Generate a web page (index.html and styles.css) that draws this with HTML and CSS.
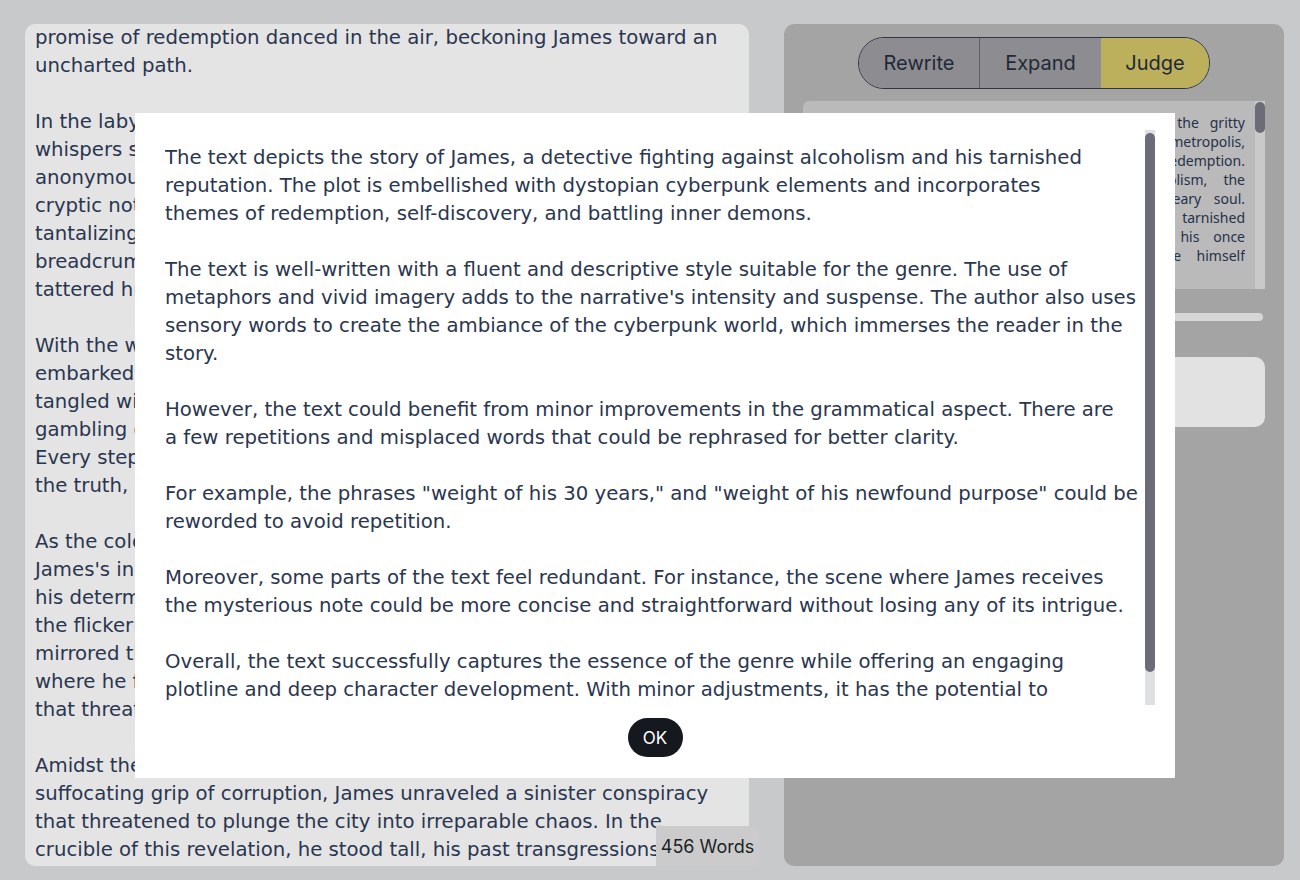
FILE: index.html
```html
<!DOCTYPE html>
<html lang="en">
<head>
<meta charset="utf-8">
<title>Story Editor</title>
<link rel="stylesheet" href="styles.css">
</head>
<body>
<div class="app">
  <div class="editor-col">
    <div class="editor">
      <p>promise of redemption danced in the air, beckoning James toward an<br>uncharted path.</p>
      <p>In the labyrinthine alleys of the neon-drenched city, hushed<br>whispers spoke of a hidden truth, carried by an elusive informant. An<br>anonymous message flickered across his battered terminal, a<br>cryptic note promising answers to questions he had long buried. The<br>tantalizing clues led him deeper into the underbelly, a trail of<br>breadcrumbs scattered across rain-slicked streets and the<br>tattered hideouts of those the city had forgotten.</p>
      <p>With the weight of his newfound purpose on his shoulders, James<br>embarked on a perilous journey through a web of deceit, one<br>tangled with corrupt officials, ruthless syndicates, and illicit<br>gambling dens that thrived beneath the glow of holographic signs.<br>Every step brought him closer to the heart of the darkness and to<br>the truth, yet each revelation tested the fragile resolve he clung to.</p>
      <p>As the colossal towers loomed above, casting long shadows over<br>James's inner turmoil, he fought against the pull of the bottle,<br>his determination fueled by the memory of those he had failed. In<br>the flickering neon light, his reflection in shattered glass<br>mirrored the man he once was, and the man he hoped to become,<br>where he found strength in the very scars that defined him, scars<br>that threatened to consume him, yet also forged his resolve.</p>
      <p>Amidst the chaos of the sprawling metropolis and the<br>suffocating grip of corruption, James unraveled a sinister conspiracy<br>that threatened to plunge the city into irreparable chaos. In the<br>crucible of this revelation, he stood tall, his past transgressions</p>
    </div>
    <div class="word-count">456 Words</div>
  </div>

  <div class="side">
    <div class="seg">
      <button class="seg-btn rewrite">Rewrite</button>
      <button class="seg-btn expand">Expand</button>
      <button class="seg-btn judge">Judge</button>
    </div>
    <div class="source">
      <div class="source-text">
        <div class="ln">James, a detective scarred by his past, roamed the gritty</div>
        <div class="ln">alleys and rain-soaked rooftops of the neon metropolis,</div>
        <div class="ln">seeking a glimmer of hope and a chance at redemption.</div>
        <div class="ln">Wrestling with his inner demons and alcoholism, the</div>
        <div class="ln">thirty-year-old man carried the burden of a weary soul.</div>
        <div class="ln">His once proud reputation on the force lay tarnished</div>
        <div class="ln">by years of mistakes that had overshadowed his once</div>
        <div class="ln">brilliant career, and now he longed to prove himself</div>
      </div>
      <div class="vscroll small"><div class="thumb"></div></div>
    </div>
    <div class="slider"></div>
    <div class="result-box"></div>
  </div>
</div>

<div class="overlay">
  <div class="modal">
    <div class="modal-body">
      <div class="modal-text">
        <p>The text depicts the story of James, a detective fighting against alcoholism and his tarnished<br>reputation. The plot is embellished with dystopian cyberpunk elements and incorporates<br>themes of redemption, self-discovery, and battling inner demons.</p>
        <p>The text is well-written with a fluent and descriptive style suitable for the genre. The use of<br>metaphors and vivid imagery adds to the narrative's intensity and suspense. The author also uses<br>sensory words to create the ambiance of the cyberpunk world, which immerses the reader in the<br>story.</p>
        <p>However, the text could benefit from minor improvements in the grammatical aspect. There are<br>a few repetitions and misplaced words that could be rephrased for better clarity.</p>
        <p>For example, the phrases "weight of his 30 years," and "weight of his newfound purpose" could be<br>reworded to avoid repetition.</p>
        <p>Moreover, some parts of the text feel redundant. For instance, the scene where James receives<br>the mysterious note could be more concise and straightforward without losing any of its intrigue.</p>
        <p>Overall, the text successfully captures the essence of the genre while offering an engaging<br>plotline and deep character development. With minor adjustments, it has the potential to</p>
      </div>
      <div class="vscroll large"><div class="thumb"></div></div>
    </div>
    <button class="ok">OK</button>
  </div>
</div>
</body>
</html>
```

FILE: styles.css
```css
html, body {
  margin: 0;
  height: 100%;
}

body {
  background: #c8c9cb;
  font-family: "DejaVu Sans", sans-serif;
  overflow: hidden;
}

.app {
  display: flex;
  gap: 25px;
  padding: 24px 0 0 25px;
  box-sizing: border-box;
  height: 880px;
}

/* ---------- left editor ---------- */
.editor-col {
  position: relative;
  width: 734px;
  height: 842px;
  flex: none;
}

.editor {
  width: 724px;
  height: 842px;
  box-sizing: border-box;
  background: #e4e4e4;
  border-radius: 10px;
  overflow: hidden;
  padding: 0 10px;
  color: #2a3650;
  font-size: 19.7px;
  line-height: 28px;
}

.editor p {
  margin: 0 0 28px;
  white-space: nowrap;
}

.word-count {
  position: absolute;
  right: 0;
  bottom: 0;
  width: 103px;
  height: 40px;
  display: flex;
  align-items: center;
  justify-content: center;
  background: #cbcbcb;
  border-radius: 0 0 8px 0;
  font-family: Inter, sans-serif;
  font-size: 18px;
  color: #1b1f27;
}

/* ---------- right side ---------- */
.side {
  width: 500px;
  height: 842px;
  flex: none;
  box-sizing: border-box;
  background: #a4a4a4;
  border-radius: 10px;
  padding: 13px 19px 0;
  display: flex;
  flex-direction: column;
}

.seg {
  align-self: center;
  display: flex;
  height: 52px;
  box-sizing: border-box;
  border: 1px solid #2f3542;
  border-radius: 26px;
  overflow: hidden;
}

.seg-btn {
  border: 0;
  margin: 0;
  padding: 0;
  height: 100%;
  background: #8d8d91;
  color: #1f2937;
  font-family: Inter, sans-serif;
  font-size: 20px;
}

.seg-btn.rewrite { width: 120px; }
.seg-btn.expand { width: 122px; border-left: 1px solid #5d5f67; }
.seg-btn.judge { width: 108px; background: #bcb05d; }

.source {
  margin-top: 12px;
  height: 188px;
  flex: none;
  display: flex;
  background: #bababa;
  border-radius: 6px 0 0 6px;
}

.source-text {
  flex: 1;
  min-width: 0;
  height: 152px;
  margin: 12px 10px 0 10px;
  overflow: hidden;
  font-family: "Noto Sans", sans-serif;
  font-size: 14px;
  line-height: 19px;
  color: #26314a;
}

.source .ln {
  text-align: justify;
  text-align-last: justify;
  white-space: nowrap;
}

.vscroll {
  width: 10px;
  flex: none;
  display: flex;
  flex-direction: column;
}

.vscroll .thumb {
  background: #6b6c78;
  border-radius: 5px;
}

.vscroll.small {
  background: #c9c9c9;
  padding-top: 1px;
}

.vscroll.small .thumb { height: 31px; }

.slider {
  margin-top: 24px;
  margin-right: 2px;
  height: 8px;
  flex: none;
  background: #d6d6d6;
  border-radius: 4px;
}

.result-box {
  margin-top: 36px;
  height: 70px;
  flex: none;
  background: #e2e2e2;
  border-radius: 10px;
}

/* ---------- modal ---------- */
.overlay {
  position: fixed;
  inset: 0;
  padding: 113px 0 0 135px;
}

.modal {
  width: 1040px;
  height: 665px;
  box-sizing: border-box;
  background: #ffffff;
  padding: 17px 30px 21px 30px;
  display: flex;
  flex-direction: column;
  align-items: center;
}

.modal-body {
  align-self: stretch;
  margin-right: -10px;
  height: 575px;
  flex: none;
  display: flex;
}

.modal-text {
  flex: 1;
  min-width: 0;
  overflow: hidden;
  padding-top: 14px;
  color: #2a3650;
  font-size: 19.7px;
  line-height: 28px;
}

.modal-text p {
  margin: 0 0 28px;
  white-space: nowrap;
}

.vscroll.large {
  background: #dfe0e2;
  padding-top: 3px;
}

.vscroll.large .thumb { height: 539px; }

.ok {
  margin-top: 13px;
  width: 55px;
  height: 39px;
  border: 0;
  border-radius: 20px;
  background: #15181e;
  color: #ffffff;
  font-family: Inter, sans-serif;
  font-size: 17px;
  padding: 0;
}
```
